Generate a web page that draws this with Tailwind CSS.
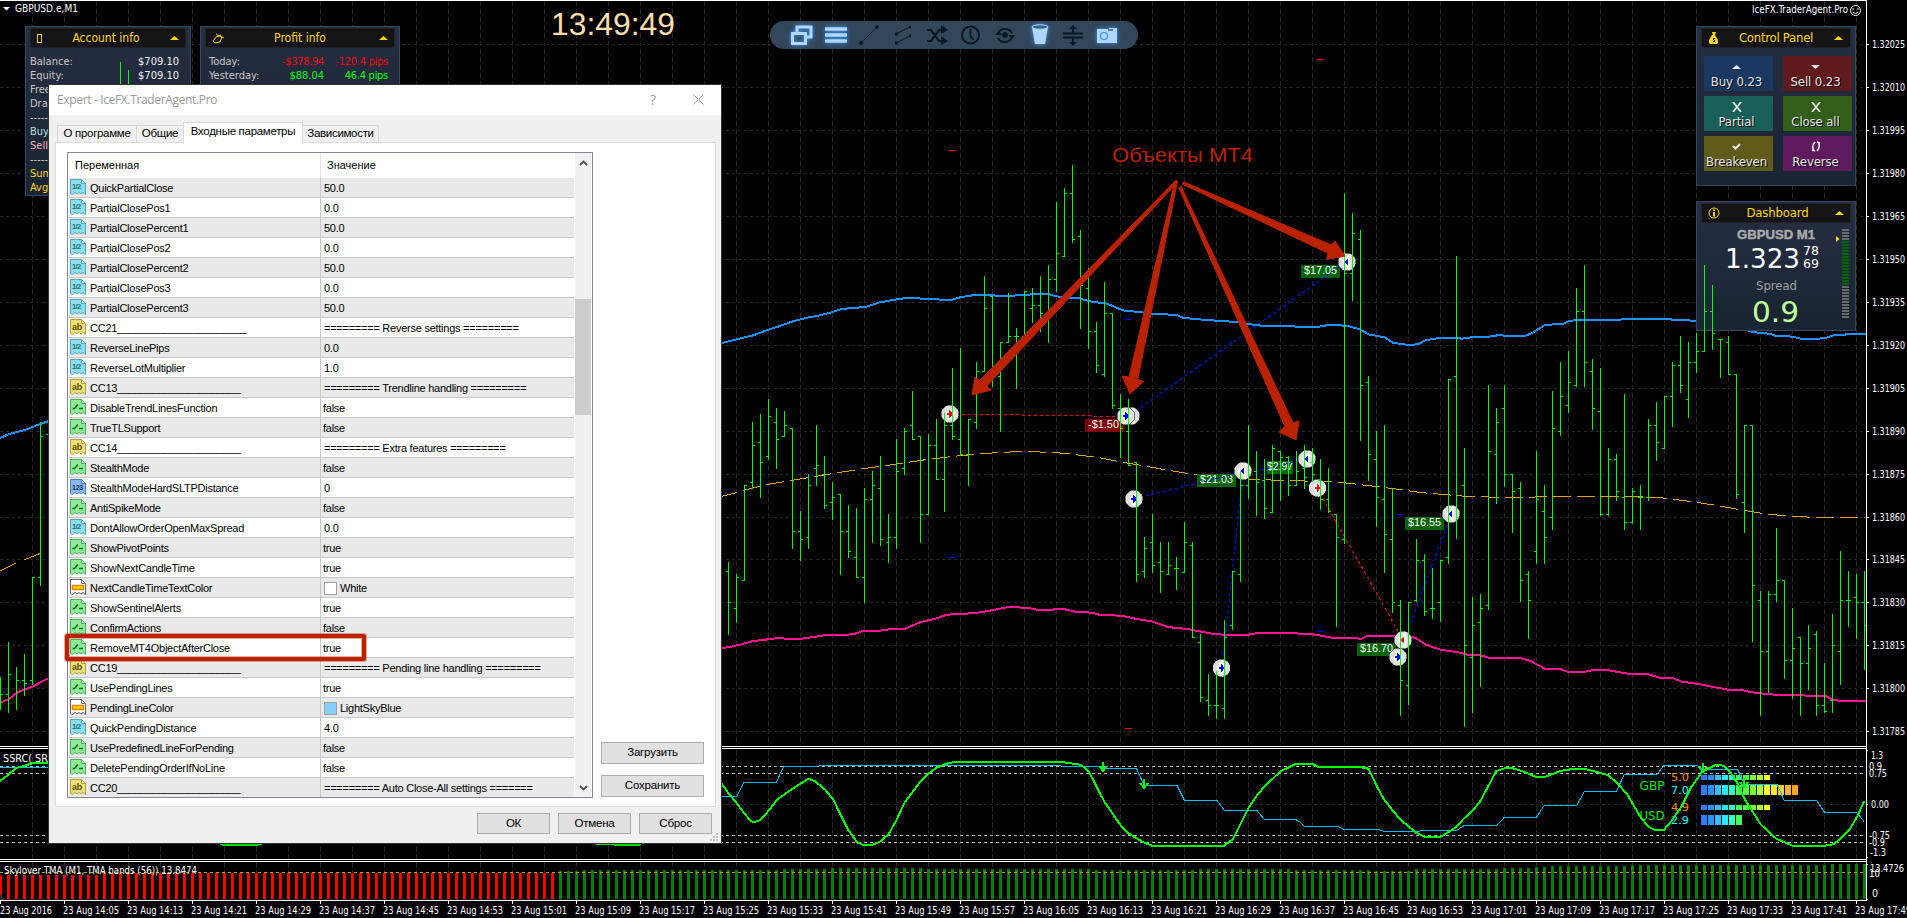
<!DOCTYPE html>
<html lang="ru">
<head>
    <meta charset="UTF-8">
    <meta name="viewport" content="width=device-width, initial-scale=1.0">
    <script src="https://cdn.jsdelivr.net/npm/@tailwindcss/browser@4"></script>
    <title>GBPUSD.e,M1</title>
</head>
<body class="bg-black overflow-hidden">

<div class="relative w-[1907px] h-[918px] overflow-hidden bg-black font-['DejaVu_Sans_Condensed','DejaVu_Sans',sans-serif]">

    <!-- grid and moving averages -->
    <svg id="back" class="absolute inset-0" width="1907" height="918"></svg>

    <!-- Account info -->
    <div class="absolute left-[25px] top-[26px] w-[166px] h-[170px] border border-[#34495e] bg-linear-to-b from-[#262f43] to-[#192432] px-1 pt-px text-[11px] leading-[14px] text-[#c8c8c8]">
        <div class="flex items-center justify-between h-5 px-1.5 bg-[#141414] border border-[#222] text-[#ffd700] text-[12px]">
            <span class="w-[5px] h-[9px] border border-[#ffd700]"></span>
            <span>Account info</span>
            <svg width="9" height="4"><path d="M0 4L4.5 0L9 4Z" fill="#ffd700"/></svg>
        </div>
        <div class="flex justify-between mt-[7px] pr-[7px]"><span>Balance:</span><span class="text-[#f0f0f0]">$709.10</span></div>
        <div class="flex justify-between pr-[7px]"><span>Equity:</span><span class="text-[#f0f0f0]">$709.10</span></div>
        <div>Free margin:</div>
        <div>Drawdown:</div>
        <div>----------------</div>
        <div class="text-[#b0e0e6]">Buy:</div>
        <div class="text-[#ffb6c1]">Sell:</div>
        <div>----------------</div>
        <div class="text-[#ffd700]">Sum:</div>
        <div class="text-[#ffd700]">Avg:</div>
    </div>

    <!-- Profit info -->
    <div class="absolute left-[200px] top-[26px] w-[200px] h-[120px] border border-[#34495e] bg-linear-to-b from-[#262f43] to-[#192432] px-1 pt-px text-[11px] leading-[14px] text-[#c8c8c8]">
        <div class="flex items-center justify-between h-5 px-1.5 bg-[#141414] border border-[#222] text-[#ffd700] text-[12px]">
            <svg width="13" height="11" fill="none" stroke="#ffd700"><path d="M4 1L7 3L9 2M4 4L7 3L10 4L8 9L3 10L1 8Z M10 4L12 5"/></svg>
            <span class="-ml-1">Profit info</span>
            <svg width="9" height="4"><path d="M0 4L4.5 0L9 4Z" fill="#ffd700"/></svg>
        </div>
        <div class="grid grid-cols-[56px_59px_64px] mt-[7px] pl-1"><span>Today:</span><span class="text-right text-[#ff0000] tracking-[-0.3px]">-$378.94</span><span class="text-right text-[#ff0000] tracking-tight">-120.4 pips</span></div>
        <div class="grid grid-cols-[56px_59px_64px] pl-1"><span>Yesterday:</span><span class="text-right text-[#00ff00]">$88.04</span><span class="text-right text-[#00ff00] tracking-tight">46.4 pips</span></div>
    </div>

    <!-- Control Panel -->
    <div class="absolute left-[1696px] top-[26px] w-[160px] h-[160px] border border-[#34495e] bg-linear-to-b from-[#262f43] to-[#192432] px-1 pt-px text-[#e6e6e6]">
        <div class="flex items-center justify-between h-5 px-[7px] bg-[#141414] border border-[#222] text-[#ffd700] text-[13px] leading-4">
            <svg width="9" height="12" fill="#ffd700"><path d="M3 0h4l-1 3h-2zM3 3h3l3 5v3l-1 1h-7l-1-1v-3z"/><path d="M4 6h2v1h-1v1h1v2h-2v-1h1v-1h-1z" fill="#141414"/></svg>
            <span class="tracking-[-0.25px]">Control Panel</span>
            <svg width="9" height="4"><path d="M0 4L4.5 0L9 4Z" fill="#ffd700"/></svg>
        </div>
        <div class="grid grid-cols-[69px_69px] auto-rows-[35px] gap-x-2.5 gap-y-[5px] pl-[3px] mt-2 text-[13px] leading-4 text-center tracking-[-0.1px] [text-shadow:1px_1px_0_#000]">
            <div class="pr-1 bg-[#1b3860]"><svg class="mx-auto mt-[9px] mb-[5px]" width="9" height="4"><path d="M0 4L4.5 0L9 4Z" fill="#e6e6e6"/></svg>Buy 0.23</div>
            <div class="pr-1 bg-[#5f1b1b]"><svg class="mx-auto mt-[9px] mb-[5px]" width="9" height="4"><path d="M0 0L4.5 4L9 0Z" fill="#e6e6e6"/></svg>Sell 0.23</div>
            <div class="pr-1 bg-[#1b5f5b]"><svg class="mx-auto mt-[6px] mb-0.5" width="10" height="10" stroke="#e6e6e6" stroke-width="1.8"><path d="M1 0L9 10M9 0L1 10"/></svg>Partial</div>
            <div class="pr-1 bg-[#335f1b]"><svg class="mx-auto mt-[6px] mb-0.5" width="10" height="10" stroke="#e6e6e6" stroke-width="1.8"><path d="M1 0L9 10M9 0L1 10"/></svg>Close all</div>
            <div class="pr-1 bg-[#5f5b1b]"><svg class="mx-auto mt-[7px] mb-1" width="9" height="7" fill="none" stroke="#e6e6e6" stroke-width="2"><path d="M1 3L3.5 5.5L8 1"/></svg>Breakeven</div>
            <div class="pr-1 bg-[#5f1b5d]"><svg class="mx-auto mt-[5px] mb-0.5" width="10" height="11" fill="none" stroke="#e6e6e6" stroke-width="1.6"><path d="M4 1Q0 5 3 10M6 10Q10 6 7 1M1 9L4 10M6 1L9 2"/></svg>Reverse</div>
        </div>
    </div>

    <!-- Dashboard -->
    <div class="absolute left-[1696px] top-[201px] w-[160px] h-[130px] border border-[#34495e] bg-linear-to-b from-[#262f43] to-[#192432] px-1 pt-px">
        <div class="flex items-center justify-between h-5 px-[6px] bg-[#141414] border border-[#222] text-[#ffd700] text-[13px] leading-4">
            <svg width="12" height="12" fill="none" stroke="#ffd700"><circle cx="6" cy="6" r="5"/><path d="M6 5v4.500M6 2.500v1.500" stroke-width="2"/></svg>
            <span class="tracking-[-0.15px]">Dashboard</span>
            <svg width="9" height="4"><path d="M0 4L4.5 0L9 4Z" fill="#ffd700"/></svg>
        </div>
    </div>

    <!-- bars, trades, indicators -->
    <svg id="front" class="absolute inset-0" width="1907" height="918"></svg>

    <!-- tool bar -->
    <div class="absolute left-[770px] top-[21px] w-[368px] h-7 rounded-full bg-[#33475a]">
        <svg width="368" height="28" fill="none" stroke="#0a1826">
            <g stroke="#b0d8ff" class="drop-shadow-[0_0_2px_#3b9cff]">
                <path d="M27 12v-6h14v10h-5" stroke-width="3"/>
                <rect x="22.500" y="12.500" width="13" height="10" stroke-width="3"/>
                <path d="M55 8h22M55 14h22M55 20h22" stroke-width="3.500"/>
                <path d="M262 6L265 23H275L278 6Z" fill="#b0d8ff" stroke="none"/>
                <ellipse cx="270" cy="6" rx="8" ry="2.200" fill="#33668f" stroke-width="1"/>
                <path d="M327 8h12v-1h8v15h-20z" fill="#b0d8ff" stroke="none"/>
                <circle cx="334" cy="15" r="3.500" stroke="#3f8fd8" stroke-width="1.200"/>
                <path d="M338 9h5" stroke="#33668f" stroke-width="1.500"/>
            </g>
            <path d="M91 22L107 6"/><circle cx="91" cy="22" r="1.500" fill="#0a1826"/><circle cx="107" cy="6" r="1.500" fill="#0a1826"/>
            <path d="M126 13L140 6M126 22L140 15"/><path d="M125 13h3M139 6h2M125 22h3M139 15h2" stroke-width="3"/>
            <path d="M157 9h4L169 20h5M157 20h4L169 9h5" stroke-width="2.200"/><path d="M171 4L178 9L171 13ZM171 15L178 20L171 24Z" fill="#0a1826" stroke="none"/>
            <circle cx="200.500" cy="14" r="8.500" stroke-width="2"/><path d="M200.500 8v7l3 4" stroke-width="1.800"/>
            <path d="M228 13Q229 8 235 8Q240 8 242 12M242 15Q241 21 235 21Q230 21 228 17" stroke-width="1.800"/><circle cx="235" cy="14" r="2.500" fill="#0a1826"/><path d="M225 14h7l-3-4zM238 14h7l-3 4z" fill="#0a1826" stroke="none"/>
            <path d="M293 12.500h20M293 16.500h20" stroke-width="2"/><path d="M303 6v6M303 17v6" stroke-width="2"/><path d="M299 8L303 4L307 8ZM299 21L303 25L307 21Z" fill="#0a1826" stroke="none"/>
        </svg>
    </div>

    <!-- Expert properties dialog -->
    <div class="absolute left-[49px] top-[85px] w-[672px] h-[758px] flex flex-col bg-[#f0f0f0] font-['Liberation_Sans',Arial,sans-serif] text-[11px] text-black shadow-[0_0_0_1px_#333]">
        <div class="flex items-center h-[30px] pl-2 pr-[17px] bg-white text-[#999] text-[12px] font-['Open_Sans',sans-serif]">
            <span class="tracking-[-0.35px]">Expert - IceFX.TraderAgent.Pro</span>
            <span class="ml-auto mr-[37px] text-[14px] -mt-0.5">?</span>
            <svg class="-mt-px" width="11" height="11" stroke="#999"><path d="M0.500 0.500L10.500 10.500M10.500 0.500L0.500 10.500"/></svg>
        </div>
        <div class="flex items-end h-[28px] pl-2 text-[11.5px] leading-[15px] tracking-[-0.3px] text-center">
            <div class="w-[80px] h-[18px] border border-b-0 border-[#d9d9d9]">О программе</div>
            <div class="w-[46px] h-[18px] border border-x-0 border-b-0 border-[#d9d9d9]">Общие</div>
            <div class="relative z-10 w-[120px] h-[22px] -mb-px pt-px border border-b-0 border-[#d9d9d9] bg-white">Входные параметры</div>
            <div class="w-[76px] h-[18px] border border-l-0 border-b-0 border-[#d9d9d9]">Зависимости</div>
        </div>
        <div class="flex w-[661px] h-[665px] ml-[6px] -mt-px pt-[9px] pl-[11px] bg-white border border-[#dcdcdc] shrink-0">
            <div class="flex w-[526px] h-[646px] border border-[#828790] overflow-hidden">
                <div class="w-[506px] pl-px tracking-[-0.25px] whitespace-nowrap">
                    <div class="flex h-[25px] leading-[25px]">
                        <div class="w-[252px] pl-[6px] border-r border-[#e5e5e5] tracking-normal">Переменная</div>
                        <div class="pl-[6px] tracking-normal">Значение</div>
                    </div>
                    <div id="params"></div>
                </div>
                <div class="flex flex-col items-center w-[16px] ml-px bg-[#f0f0f0]">
                    <svg class="mt-[7px] shrink-0" width="9" height="6" fill="none" stroke="#505050" stroke-width="1.800"><path d="M1 5L4.500 1.500L8 5"/></svg>
                    <div class="w-full h-[116px] mt-[133px] bg-[#cdcdcd] shrink-0"></div>
                    <svg class="mt-auto mb-[6px] shrink-0" width="9" height="6" fill="none" stroke="#505050" stroke-width="1.800"><path d="M1 1L4.500 4.500L8 1"/></svg>
                </div>
            </div>
            <div class="flex flex-col justify-end gap-[11px] ml-2 pb-[9px] text-[11.5px] tracking-[-0.2px]">
                <button class="w-[103px] h-[22px] border border-[#adadad] bg-[#e1e1e1]">Загрузить</button>
                <button class="w-[103px] h-[22px] border border-[#adadad] bg-[#e1e1e1]">Сохранить</button>
            </div>
        </div>
        <div class="flex justify-end gap-2 mt-[6px] pr-[9px] text-[11.5px] tracking-[-0.2px]">
            <button class="w-[73px] h-[21px] border border-[#adadad] bg-[#e1e1e1]">ОК</button>
            <button class="w-[73px] h-[21px] border border-[#adadad] bg-[#e1e1e1]">Отмена</button>
            <button class="w-[73px] h-[21px] border border-[#adadad] bg-[#e1e1e1]">Сброс</button>
        </div>
        <svg class="absolute right-[3px] bottom-[2px]" width="8" height="8" fill="#bfbfbf"><path d="M6 0h2v2h-2zM3 3h2v2h-2zM6 3h2v2h-2zM0 6h2v2h-2zM3 6h2v2h-2zM6 6h2v2h-2z"/></svg>
    </div>
    <div class="absolute left-[65px] top-[634px] w-[301px] h-[27px] border-4 border-[#ba2200] rounded-xs shadow-[0_0_0_1px_#ba220060,inset_0_0_0_1px_#ba220060]"></div>
</div>

<script>
    // input parameters: type, name, value
    var params = [
        ['f', 'QuickPartialClose', '50.0'], ['f', 'PartialClosePos1', '0.0'], ['f', 'PartialClosePercent1', '50.0'],
        ['f', 'PartialClosePos2', '0.0'], ['f', 'PartialClosePercent2', '50.0'], ['f', 'PartialClosePos3', '0.0'],
        ['f', 'PartialClosePercent3', '50.0'], ['s', 'CC21______________________', '========= Reverse settings ========='],
        ['f', 'ReverseLinePips', '0.0'], ['f', 'ReverseLotMultiplier', '1.0'],
        ['s', 'CC13_____________________', '========= Trendline handling ========='],
        ['b', 'DisableTrendLinesFunction', 'false'], ['b', 'TrueTLSupport', 'false'],
        ['s', 'CC14_____________________', '========= Extra features ========='],
        ['b', 'StealthMode', 'false'], ['i', 'StealthModeHardSLTPDistance', '0'], ['b', 'AntiSpikeMode', 'false'],
        ['f', 'DontAllowOrderOpenMaxSpread', '0.0'], ['b', 'ShowPivotPoints', 'true'], ['b', 'ShowNextCandleTime', 'true'],
        ['c', 'NextCandleTimeTextColor', 'White'], ['b', 'ShowSentinelAlerts', 'true'], ['b', 'ConfirmActions', 'false'],
        ['b', 'RemoveMT4ObjectAfterClose', 'true'], ['s', 'CC19_____________________', '========= Pending line handling ========='],
        ['b', 'UsePendingLines', 'true'], ['c', 'PendingLineColor', 'LightSkyBlue'], ['f', 'QuickPendingDistance', '4.0'],
        ['b', 'UsePredefinedLineForPending', 'false'], ['b', 'DeletePendingOrderIfNoLine', 'false'],
        ['s', 'CC20_____________________', '========= Auto Close-All settings =======']
    ];
    // fill, outline, glyph
    var look = {
        f: ['#8fdcec', '#4fa9bd', '<text x="2" y="9.500" font-size="7.500" font-weight="bold" fill="#15707f" textLength="9">1/2</text>'],
        s: ['#eedf7c', '#b5a23c', '<text x="2" y="11" font-size="9" font-weight="bold" fill="#5c4c00" textLength="10">ab</text>'],
        b: ['#8eea98', '#49b25a', '<path d="M2.500 9.500h2L8 5.500M9 9.500h4" stroke="#0c6b20" stroke-width="1.500" fill="none"/>'],
        i: ['#8cb8ee', '#4a7cba', '<text x="2" y="11" font-size="7" font-weight="bold" fill="#0b2f66" textLength="11">123</text>'],
        c: ['#ffffff', '#666666', '<rect x="2.500" y="6.500" width="11" height="4" fill="#ffd800" stroke="#f08000" stroke-width="1.500"/>']
    };

    document.getElementById('params').innerHTML = params.map(function (p, i) {
        var l = look[p[0]];
        var icon = '<svg class="shrink-0" width="16" height="17"><path d="M0.500 0.500H11.500L15.500 4.500V15.500L13 13.500L11 15L9 13.500L7 15L5 13.500L2.500 15.500L0.500 14.500Z" fill="' + l[0] + '" stroke="' + l[1] + '"/><path d="M11.500 0.500V4.500H15.500" fill="#fff6" stroke="' + l[1] + '"/>' + l[2] + '</svg>';
        var sw = p[0] == 'c' ? '<span class="inline-block w-[13px] h-[13px] mr-[3px] border border-[#a0a0a0] align-[-3px]" style="background:' + p[2] + '"></span>' : '';
        return '<div class="flex h-5 border-b border-[#c8c8c8] leading-[21px] ' + (i % 2 ? 'bg-white' : 'bg-[#e9e9e9]') + '">' +
            '<div class="flex gap-1 w-[252px] pl-px pt-px border-r border-[#c8c8c8]">' + icon + '<span class="-mt-px">' + p[1] + '</span></div>' +
            '<div class="' + (p[0] == 'b' ? 'pl-[2px]' : 'pl-[3px]') + '">' + sw + p[2] + '</div></div>';
    }).join('');

    var TAHOMA = "'DejaVu Sans Condensed','DejaVu Sans',sans-serif";
    var ARIAL = "'Liberation Sans',Arial,sans-serif";
    var GRID = '#272727';
    var out = '';
    function rect(x, y, w, h, c) { out += '<rect x="' + x + '" y="' + y + '" width="' + w + '" height="' + h + '" fill="' + c + '"/>'; }
    function line(x1, y1, x2, y2, c, dash) {
        out += '<path d="M' + x1 + ' ' + y1 + 'L' + x2 + ' ' + y2 + '" fill="none" stroke="' + c + '"' + (dash ? ' stroke-dasharray="' + dash + '"' : '') + '/>';
    }
    function poly(pts, c, w, dash) {
        out += '<polyline points="' + pts + '" fill="none" stroke="' + c + '" stroke-width="' + w + '"' + (dash ? ' stroke-dasharray="' + dash + '"' : '') + '/>';
    }
    function text(x, y, s, size, c, w, font, extra) {
        out += '<text x="' + x + '" y="' + y + '" font-size="' + size + '" fill="' + c + '" font-family="' + (font || TAHOMA) + '"' +
            (w ? ' textLength="' + w + '" lengthAdjust="spacingAndGlyphs"' : '') + ' ' + (extra || '') + '>' + s + '</text>';
    }
    // points measured on an enlarged fragment -> chart pixels
    function map(ox, oy, kx, ky, pts) {
        return pts.split(' ').map(function (p) {
            p = p.split(',');
            return (ox + p[0] / kx).toFixed(1) + ',' + (oy + p[1] / ky).toFixed(1);
        }).join(' ') + ' ';
    }

    // ---------- back layer ----------
    out = '<g shape-rendering="crispEdges">';
    for (var x = 32; x < 1866; x += 32) {
        line(x + .5, 1, x + .5, 746, GRID, '5 3');
        line(x + .5, 750, x + .5, 859, GRID, '5 3');
        line(x + .5, 862, x + .5, 900, GRID, '5 3');
    }
    var ys = [44, 87, 130, 173, 216, 259, 302, 345, 388, 431, 474, 517, 559, 602, 645, 688, 731];
    ys.concat([804, 899]).forEach(function (y) { line(0, y + .5, 1866, y + .5, GRID, '3 3'); });
    poly('0,438 9,434 25,430 40,424 49,421', '#1e90ff', 2);
    poly(map(720, 280, 3, 3, '5,189 50,178 100,166 145,149 180,138 215,125 260,113 290,108 335,97 365,87 410,83 440,80 475,68 530,58 565,53 620,57 695,60 720,52 770,44 815,44 835,49 870,48 910,44 985,42 1000,47 1035,53 1080,55') +
        map(1080, 160, 3, 2.8, '0,388 30,396 80,402 130,421 180,426 215,430 290,434 310,442 380,448 475,454 530,463 620,466 715,467 745,462 800,464 840,474 865,488 915,497 940,512 985,518 1015,516 1035,505 1085,497 1150,500') +
        map(1460, 240, 3, 3, '0,297 40,291 85,290 120,285 140,288 195,288 215,280 255,255 310,251 330,242 360,240 455,241 510,236 625,236 640,240 708,242'), '#1e90ff', 2);
    poly(map(1460, 240, 3, 3, '865,273 900,279 930,281 945,287 1000,290 1025,297 1070,297 1105,292 1120,286 1180,282 1218,282'), '#1e90ff', 2);
    poly('0,702.600 9,699 18,692 33,686.500 41,682 49,678', '#ff1493', 2);
    poly(map(720, 280, 3, 3, '5,1104 25,1102 60,1094 100,1083 145,1078 180,1073 200,1077 240,1077 320,1065 385,1064 410,1060 430,1052 480,1052 515,1047 555,1046 600,1027 650,1015 680,1004 770,999 820,990 870,980 930,985 950,989 995,990 1010,986 1030,987 1070,996') +
        map(1080, 160, 3, 2.8, '0,1265 40,1268 60,1274 125,1276 165,1284 220,1293 265,1308 320,1313 400,1327 440,1330 500,1330 530,1325 640,1325 705,1329 760,1338 845,1340 860,1333 985,1332 1010,1340 1035,1356 1080,1371 1130,1378') +
        map(1460, 240, 3, 3, '0,1238 25,1245 60,1246 90,1254 180,1254 210,1262 255,1286 300,1287 325,1296 370,1296 400,1290 440,1290 510,1302 565,1303 600,1313 640,1315 665,1325 710,1331 760,1341 810,1350 850,1351 870,1356 910,1361 970,1366 1095,1367 1120,1380 1145,1383 1218,1383'), '#ff1493', 2);
    poly('0,571 16,563', '#daa520', 1);
    poly('24,560 41,553', '#daa520', 1);
    poly(map(720, 280, 3, 3, '0,650 55,637 75,630 145,613 240,597 335,581 430,566 530,552 625,538 720,527 815,519 910,514 960,516 1010,518 1060,523') +
        map(1080, 160, 3, 2.8, '0,827 50,832 125,846 200,858 260,868 340,880 420,889 500,893 600,897 720,900 775,902 860,911 940,920 1020,931 1110,938') +
        map(1460, 240, 3, 3, '15,769 60,769 100,772 200,772 280,769 500,769 590,772 640,778 710,787 780,798 850,811 925,823 1000,829 1060,832 1216,832'), '#daa520', 1, '18 6');
    out += '</g>';
    document.getElementById('back').innerHTML = out;

    // ---------- front layer ----------
    out = '';
    text(15, 12, 'GBPUSD.e,M1', 11, '#fff', 63);
    out += '<path d="M3 7H10L6.500 10.500Z" fill="#fff"/>';
    text(551, 35, '13:49:49', 32, '#ffdead', 124, ARIAL);
    text(1752, 13, 'IceFX.TraderAgent.Pro', 11, '#fff', 96);
    out += '<circle cx="1855.500" cy="10.500" r="5" fill="none" stroke="#fff"/><path d="M1853 8v2M1858 8v2M1852.500 12Q1855.500 15 1858.500 12" fill="none" stroke="#fff"/>';

    // trade labels
    [[1301, 265, 39, '#006400', '$17.05'], [1085, 419, 39, '#800000', '-$1.50'], [1197, 474, 39, '#006400', '$21.03'],
     [1267, 461, 26, '#006400', '$2.97'], [1405, 517, 39, '#006400', '$16.55'], [1357, 643, 39, '#006400', '$16.70']].forEach(function (l) {
        rect(l[0], l[1], l[2], 13, l[3]);
        text(l[0] + (l[2] < 30 ? 0 : 3), l[1] + 8.5, l[4], 11, '#fff', l[2] < 30 ? 26 : l[4][0] == '-' ? 31 : 33, ARIAL);
    });
    out += '<g shape-rendering="crispEdges">';
    line(950, 414, 1126, 416.5, '#ff0000', '3 3');
    [[1136, 411, 1346, 262], [1134, 499, 1243, 472], [1222, 668, 1243, 472], [1243, 474, 1307, 459], [1398, 657, 1451, 514]].forEach(function (l) {
        line(l[0], l[1], l[2], l[3], '#0000ff', '3 3');
    });
    line(1317, 488, 1403, 640, '#ff0000', '3 3');
    [[949, 150, 1], [1317, 59, 1], [1125, 728, 1], [1125, 319, 0], [949, 557, 0], [1317, 631, 0], [1397, 514, 0]].forEach(function (m) {
        rect(m[0], m[1], 7, 1, m[2] ? '#ff0000' : '#0000ff');
    });
    // entry / exit markers
    [[950, 414, 'red', 1], [1131, 416, 'red', -1], [1126, 416, 'blue', 1], [1134, 499, 'blue', 1], [1243, 471, 'blue', -1],
     [1307, 459, 'blue', -1], [1317.5, 488, 'red', 1], [1221.5, 668, 'blue', 1], [1347, 262, 'blue', -1], [1451, 514, 'blue', -1],
     [1398, 657, 'blue', 1], [1403, 640, 'red', -1]].forEach(function (m) {
        out += '<g transform="translate(' + m[0] + ' ' + m[1] + ')"><circle r="9" fill="#e0e0e0" stroke="#000" stroke-width=".5"/>' +
            (m[3] > 0 ? '<path d="M-3 -1h2v-3h1l3 4l-3 4h-1v-3h-2z" fill="' + m[2] + '" stroke="#fff" stroke-width="3" paint-order="stroke"/>'
                : '<path d="M-3 0L1 -4V4Z" fill="' + m[2] + '" stroke="#fff" stroke-width="3" paint-order="stroke"/>') + '</g>';
    });

    // bars: first x, then open,high,low,close every 8px
    function bars(x0, rows) {
        rows.split(' ').forEach(function (r, i) {
            var b = r.split(',').map(Number), x = x0 + i * 8;
            rect(x, b[1], 1, b[2] - b[1] + 1, '#00ff00');
            if (b[0]) rect(x - 2, b[0], 2, 1, '#00ff00');
            if (b[3]) rect(x + 1, b[3], 2, 1, '#00ff00');
        });
    }
    bars(0, '0,677,709,694 694,642,712,674 0,667,709,680 680,654,695,683 680,577,684,577 577,422,585,436 434,434,526,0');
    bars(120, '0,62,90,0 0,70,90,0');
    bars(728, '571,562,634,602 608,574,622,577 580,485,580,485 482,422,488,445 442,414,497,462 456,399,459,416 422,408,468,439 436,411,436,425 ' +
        '428,428,548,531 531,511,560,539 537,474,548,485 468,425,485,465 474,456,508,505 502,482,519,497 494,494,574,531 531,505,557,551 ' +
        '557,508,577,577 577,488,602,499 499,471,542,485 488,456,545,539 542,514,562,537 537,439,548,471 468,428,474,431 425,391,439,439 ' +
        '436,436,542,514 514,434,514,445 445,419,479,479 479,413,511,425 425,368,439,436 439,348,455,454 454,419,485,419 422,362,428,371 ' +
        '371,276,371,308 296,296,386,367 376,342,431,342 342,293,342,336 336,328,388,336 336,291,345,291 308,288,322,305 305,276,331,313 ' +
        '313,265,342,279 279,202,291,253 256,188,256,193 193,165,242,239 236,230,328,285 288,268,348,331 331,322,372,365 374,282,376,313 ' +
        '313,313,408,405 408,394,457,428 431,399,465,465 462,462,581,574 571,537,577,548 542,514,572,565 562,542,592,571 574,542,574,565 ' +
        '568,557,589,568 572,522,572,542 545,542,637,637 642,634,701,697 700,674,715,705 705,671,718,705 708,620,718,637 625,571,629,571 ' +
        '574,471,581,485 485,425,498,474 471,451,515,482 480,459,518,508 512,445,512,448 451,451,500,457 457,456,495,485 485,451,485,471 ' +
        '468,445,488,477 462,448,481,474 480,459,509,499 499,468,512,511 514,514,626,537 539,193,543,273 273,213,300,233 239,230,440,385 ' +
        '382,376,480,454 459,431,526,497 499,425,572,534 539,488,612,602 605,600,715,680 685,602,704,602 600,539,601,560 560,554,615,611 ' +
        '608,568,618,608 602,560,621,560 557,379,563,379 376,256,538,517 485,448,726,645 657,597,712,625 622,594,686,608 605,385,609,451 ' +
        '454,408,503,422 408,385,486,474 474,474,532,491 488,482,601,580 574,571,638,600 551,451,563,499 511,485,563,537 517,391,529,428 ' +
        '431,362,435,396 405,351,412,382 385,288,386,311 311,265,386,362 371,359,429,408 411,368,515,514 514,448,515,459 459,454,500,491 ' +
        '497,394,529,522 522,488,523,491 497,485,529,497 497,419,500,425 425,402,460,442 448,396,448,396 396,362,426,365 365,336,392,385 ' +
        '399,342,417,362 362,333,372,351 351,265,351,311 311,285,349,333 339,339,377,339 342,336,374,374 374,374,498,494 502,425,532,425 ' +
        '425,425,641,585 600,591,715,651 651,591,692,594 594,528,601,580 580,580,678,660 660,608,698,648 637,637,715,663 663,625,689,648 ' +
        '634,631,715,705 705,663,712,711 700,614,712,645 651,551,684,600 600,571,626,600 597,574,638,602 602,571,669,625');

    // ssrc window
    [766, 773, 835, 842].forEach(function (y) { line(0, y + .5, 1866, y + .5, '#c0c0c0', '3 3'); });
    out += '</g>';
    text(1639.5, 790, 'GBP', 12.5, '#00e600', 25);
    text(1639.5, 820, 'USD', 12.5, '#00e600', 25);
    text(1671, 781, '5.0', 11, '#ff8c00', 18);
    text(1671, 794, '7.0', 11, '#00ffff', 18);
    text(1671, 811, '4.9', 11, '#ff8c00', 18);
    text(1671, 824, '2.9', 11, '#00ffff', 18);
    out += '<g shape-rendering="crispEdges">';
    var ramp = ['#2b7fff', '#2b90ff', '#2bc4ff', '#2be8ff', '#2bffc8', '#4cf858', '#50ff40', '#80ff30', '#b0ff2b', '#ffff2b', '#ffe62b', '#ffd02b', '#ffb42b', '#ffa42b'];
    [[775, 5, 10], [785, 10, 14], [805, 5, 10], [815, 10, 6]].forEach(function (r) {
        for (var i = 0; i < r[2]; i++) rect(1701 + i * 7, r[0], 6, r[1], ramp[i]);
    });
    rect(0, 767, 49, 1, '#00bfff');
    poly(map(700, 730, 2.529, 3, '53,199 93,199 111,157 193,157 212,109 300,109 305,106 905,106 915,109 1010,109 1025,115 1104,115 1123,166 1206,166 1225,211 1307,211 1326,241 1408,241 1427,268 1500,268') +
        map(1300, 730, 2.583, 3, '-12,268 0,276 12,289 97,289 113,298 200,298 217,304 308,304 312,301 405,301 425,286 508,286 528,262 611,262 631,226 715,226 735,184 817,184 838,133 922,133 941,106 1025,106 1040,118 1130,118 1148,163 1232,163 1251,212 1335,212 1355,247 1438,247 1457,275'), '#00bfff', 1);
    poly('0,781 8,775 16,768 24,766 33,763 49,763', '#00ff00', 2);
    poly('217,842 223,845 257,845 267,842', '#00e000', 2);
    poly('590,843 602,844 625,845 639,845 642,842', '#00e000', 2);
    poly(map(700, 730, 2.529, 3, '53,158 72,190 93,220 113,252 130,274 138,276 153,270 173,243 195,209 233,177 274,146 291,154 317,179 337,209 356,255 375,300 397,337 413,345 435,345 455,335 477,313 497,270 517,219 557,155 577,131 597,114 620,102 643,96 915,96 963,104 983,124 1022,214 1065,288 1085,311 1120,336 1145,348 1325,348 1348,327 1387,235 1408,197 1427,170 1468,124 1508,101') +
        map(1300, 730, 2.583, 3, '0,101 33,102 47,111 155,111 177,116 200,172 217,208 240,242 260,270 300,308 322,320 364,320 400,294 425,264 445,243 465,215 507,123 528,115 550,115 580,126 610,141 632,141 675,122 710,116 740,118 795,135 820,160 845,193 880,262 900,290 917,300 940,300 960,272 985,230 1010,172 1040,124 1075,104 1095,107 1110,124 1130,160 1150,210 1190,283 1230,326 1272,347 1355,347 1378,343 1400,322 1420,298 1440,258 1457,214'), '#00ff00', 2);
    [[1103, 762], [1144, 779], [1703, 763], [1744, 778]].forEach(function (a) {
        out += '<path d="M' + a[0] + ' ' + a[1] + 'v8M' + (a[0] - 4) + ' ' + (a[1] + 4) + 'l4 5l4 -5" fill="none" stroke="#00ff00" stroke-width="2"/>';
    });

    // tma window: bar tops by x range
    var tops = [[104, 875], [560, 873], [584, 871], [780, 870], [832, 869], [924, 868], [1090, 869], [1200, 870], [1290, 869], [1370, 870],
        [1416, 871], [1500, 869], [1536, 868], [1552, 867], [1632, 866], [1832, 865], [1907, 864]];
    for (x = 0; x < 1866; x += 8) {
        var barTop = tops.find(function (t) { return x < t[0]; })[1];
        rect(x ? x - 1 : 0, barTop, x ? 3 : 2, 899 - barTop, x < 560 ? '#ff0000' : '#008000');
    }
    line(0, 872.5, 1866, 872.5, '#b8a020', '3 3');
    out += '<path d="M0 893L5 900H0Z" fill="#303030"/>';

    // frames
    rect(0, 0, 1867, 1, '#fff');
    rect(1866, 0, 1, 901, '#fff');
    [746, 748, 859, 861, 900].forEach(function (y) { rect(0, y, 1867, 1, '#fff'); });
    ys.forEach(function (y) { rect(1867, y, 2, 1, '#fff'); });
    [750, 804, 857, 864, 899].forEach(function (y) { rect(1867, y, 1, 1, '#fff'); });
    for (x = 0; x < 1866; x += 64) rect(x, 901, 1, 3, '#fff');
    out += '</g>';

    text(3, 762, 'SSRC( SRSI', 11, '#fff', 54);
    text(4, 874, 'Skylover TMA (M1, TMA bands (56)) 13.8474', 11, '#fff', 193);
    ys.forEach(function (y, k) { text(1872, y + 4, '1.' + (32025 - 15 * k), 11, '#fff', 33); });
    text(1871, 759, '1.3', 11, '#fff', 12);
    text(1869, 770, '0.9', 11, '#fff', 13);
    text(1869, 777, '0.75', 11, '#fff', 18);
    text(1871, 808, '0.00', 11, '#fff', 18);
    text(1869, 839, '-0.75', 11, '#fff', 21);
    text(1869, 846, '-0.9', 11, '#fff', 16);
    text(1870, 856, '-1.3', 11, '#fff', 16);
    text(1870, 872, '13.4726', 11, '#fff', 34);
    text(1869, 877, '10', 11, '#fff', 11);
    text(1872, 897, '0', 11, '#fff', 6);
    text(0, 914, '23 Aug 2016', 11, '#fff', 52);
    for (var k = 1; k < 30; k++) {
        var m = 14 * 60 + 5 + (k - 1) * 8;
        text(k * 64 - 1, 914, '23 Aug ' + Math.floor(m / 60) + ':' + ('0' + m % 60).slice(-2), 11, '#fff', 56);
    }

    // dashboard values
    text(1737, 239, 'GBPUSD M1', 12, '#a9a9a9', 78, ARIAL, 'font-weight="bold" stroke="#a9a9a9" stroke-width=".4"');
    text(1725, 268, '1.323', 26, '#fff', 75, "'DejaVu Sans',sans-serif");
    text(1803, 255, '78', 12, '#fff', 16, "'DejaVu Sans',sans-serif");
    text(1803, 268, '69', 12, '#fff', 16, "'DejaVu Sans',sans-serif");
    text(1756, 290, 'Spread', 13, '#a0a0a0', 41);
    text(1752, 321.5, '0.9', 29, '#c0ff98', 47, "'DejaVu Sans',sans-serif");
    out += '<path d="M1836 236L1839.500 239L1836 242Z" fill="#ffd700"/>';
    for (k = 0; k < 30; k++) rect(1842, 229 + k * 3, 7, 2, k > 3 && k < 19 ? '#006400' : '#696969');

    // annotation
    text(1112, 162, 'Объекты МТ4', 20, '#ba2200', 141, ARIAL);
    function arrow(x1, y1, x2, y2, ax, ay, bx, by) {
        var dx = x2 - x1, dy = y2 - y1, n = Math.hypot(dx, dy), ux = dx / n, uy = dy / n, ex = x2 - ux * 17, ey = y2 - uy * 17;
        out += '<path d="M' + [x1 - uy * 1.3, y1 + ux * 1.3] + 'L' + [ex - uy * 4.5, ey + ux * 4.5] + 'L' + [ax, ay] + 'L' + [x2, y2] +
            'L' + [bx, by] + 'L' + [ex + uy * 4.5, ey - ux * 4.5] + 'L' + [x1 + uy * 1.3, y1 - ux * 1.3] + 'Z" fill="#ba2200" stroke="#ba2200" stroke-linejoin="round"/>';
    }
    arrow(1177, 181, 972, 395, 991, 390, 975, 377);
    arrow(1176, 182, 1130, 394, 1143.5, 381.5, 1122, 376);
    arrow(1180, 187, 1296, 440, 1279, 432, 1299, 421);
    arrow(1183, 183, 1345, 256, 1326.5, 259.5, 1335, 241);
    document.getElementById('front').innerHTML = out;
</script>
</body>
</html>
